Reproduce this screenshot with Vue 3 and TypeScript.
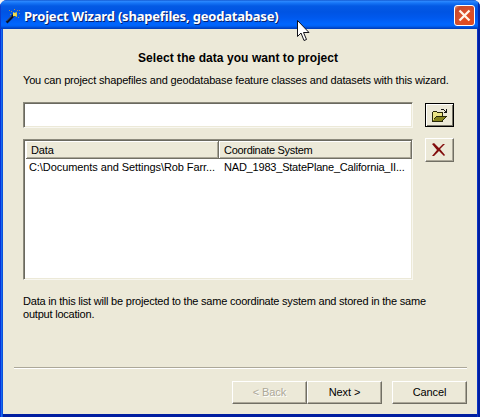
<script setup lang="ts">
interface DataRow {
  path: string
  system: string
}

const rows: DataRow[] = [
  { path: 'C:\\Documents and Settings\\Rob Farr...', system: 'NAD_1983_StatePlane_California_II...' },
]
</script>

<template>
  <div class="window">
    <header class="titlebar">
      <svg class="wand" width="16" height="17" viewBox="0 0 16 17">
        <path d="M1.500 14.500L9 7" stroke="#0c1224" stroke-width="2.600" />
        <path d="M1.200 13.400L6.500 8" stroke="#7f96c8" stroke-width=".5" />
        <path d="M8 4l2 1 1.500-1.500L12 6v3l-2-1-2 .5z" fill="#e8d23c" />
        <path d="M8 5h3v3H8z" fill="#f2de50" />
        <path d="M4 2h1v1H4zM6 3h1v1H6zM9 1h1v1H9zM12 2h1v1h-1zM14 5h1v1h-1zM13 9h1v1h-1zM5 6h1v1H5zM14 2h1v1h-1z" fill="#a58f58" />
      </svg>
      <h1>Project Wizard (shapefiles, geodatabase)</h1>
      <button class="close" aria-label="Close">
        <svg width="19" height="19" viewBox="0 0 19 19">
          <path d="M4.500 4.500l10 10M14.500 4.500l-10 10" stroke="#fff5e8" stroke-width="2.300" />
        </svg>
      </button>
    </header>

    <main class="body">
      <h2>Select the data you want to project</h2>
      <p class="intro">You can project shapefiles and geodatabase feature classes and datasets with this wizard.</p>

      <div class="picker">
        <input class="path" type="text" aria-label="Data path" />
        <button class="tool open" aria-label="Browse">
          <svg width="17" height="15" viewBox="0 0 17 15" shape-rendering="crispEdges">
            <path d="M1 4h1V3h4v1h6v4h4v1h-1v1h-1v1h-1v1h-1v2H1z" fill="#29290a" />
            <path d="M2 5V4h4v1h5v3H5v1H4v1H3v2H2z" fill="#eae486" />
            <path d="M5 9h9v1h-1v1h-1v1h-1v1H2v-1h1v-1h1v-1h1z" fill="#85841d" />
            <path d="M10 2V1h3v1h1v1h1V1h1v4h-3V4h1V3h-1V2z" fill="#171717" />
          </svg>
        </button>
        <div class="list">
          <div class="cols head">
            <div class="cell">Data</div>
            <div class="cell system-title">Coordinate System</div>
          </div>
          <div v-for="row in rows" :key="row.path" class="cols row">
            <div class="path-text">{{ row.path }}</div>
            <div class="system-text">{{ row.system }}</div>
          </div>
        </div>
        <button class="tool remove" aria-label="Remove">
          <svg width="14" height="14" viewBox="0 0 14 14">
            <path d="M0 1l2-1 5 5 4-4h2L8 6l5 6-1 1-5-5-5 5H0l5-6z" fill="#820c0c" />
          </svg>
        </button>
      </div>

      <p class="note">
        <span>Data in this list will be projected to the same coordinate system and stored in the same</span><br />
        <span>output location.</span>
      </p>

      <footer class="actions">
        <button class="btn back" disabled>&lt; Back</button>
        <button class="btn next">Next &gt;</button>
        <button class="btn cancel">Cancel</button>
      </footer>
    </main>

    <svg class="cursor" width="13" height="22" viewBox="0 0 13 22">
      <path d="M.5.5v16l3.500-3.500 3 7.500 2.500-1-3-7H12z" fill="#fff" stroke="#101018" />
    </svg>
  </div>
</template>

<style>
body {
  background: #f4f4f4;
}
</style>

<style scoped>
* {
  box-sizing: border-box;
}

.window {
  position: relative;
  display: flex;
  flex-direction: column;
  width: 480px;
  height: 417px;
  overflow: hidden;
  border-radius: 7px 7px 0 0;
  background: linear-gradient(90deg, #0831d9 0 1px, #166aee 1px 2px, #0a50dc 2px 3px, transparent 3px 477px, #0a32c4 477px 478px, #001ea0 478px),
    linear-gradient(#0a36c8, #001ea0);
  color: #000;
  font: 11px/13px "Liberation Sans", Arial, sans-serif;
  letter-spacing: -0.16px;
}

.titlebar {
  display: flex;
  align-items: flex-start;
  flex: none;
  height: 29px;
  padding: 5px 5px 0 5px;
  background: linear-gradient(#0b48c0 0, #2f8bff 1px, #1675f6 3px, #045ae4 6px, #0054e3 12px, #0059ee 18px, #0066ff 24px, #0062f6 26px, #0046c8 28px, #003cb8 29px);
  box-shadow: inset 1px 0 #0a3ccc, inset -2px 0 #002bb0;
}

.wand {
  flex: none;
  margin-top: 3px;
}

h1 {
  flex: 1;
  margin: 3px 0 0 3px;
  color: #fff;
  font: bold 13px/16px "Noto Sans", sans-serif;
  letter-spacing: -0.2px;
  white-space: nowrap;
  text-shadow: 1px 1px #07216e;
}

.close {
  flex: none;
  width: 21px;
  height: 21px;
  padding: 0;
  border: 1px solid #fff;
  border-radius: 3px;
  background: radial-gradient(circle at 70% 75%, #e34a1a, #d9502c 50%, #c54a2c 80%, #e59b83);
}

.close svg {
  display: block;
}

.body {
  flex: none;
  height: 385px;
  margin: 0 3px;
  padding: 22px 11px 0;
  background: #ece9d8;
}

h2,
p {
  margin: 0;
  white-space: nowrap;
}

h2 {
  padding-left: 124px;
  font: bold 12px/15px "Liberation Sans", Arial, sans-serif;
  letter-spacing: 0.06px;
}

.intro {
  margin: 8px 0 0 9px;
}

.picker {
  display: grid;
  grid-template-columns: 390px 30px;
  grid-template-rows: 26px 141px;
  column-gap: 12px;
  row-gap: 11px;
  margin: 15px 0 0 9px;
}

.path,
.list {
  width: 390px;
  border: 1px solid;
  border-color: #8c8a7c #f8f7f0 #f8f7f0 #8c8a7c;
  border-radius: 0;
  background: #fff;
  box-shadow: inset 1px 1px #6a695f, inset -1px -1px #ece9d8;
  outline: 0;
}

.list {
  padding: 1px 2px 2px 2px;
}

.tool,
.btn {
  display: flex;
  align-items: center;
  justify-content: center;
  padding: 0;
  border: 1px solid;
  border-color: #fff #716f64 #716f64 #fff;
  border-radius: 0;
  background: #ece9d8;
  box-shadow: inset -1px -1px #aca899;
  color: #000;
  font: inherit;
  letter-spacing: -0.1px;
  white-space: nowrap;
}

.tool {
  width: 29px;
  height: 24px;
}

.open {
  margin-top: 1px;
  border-color: #000;
  box-shadow: inset 1px 1px #fff, inset -1px -1px #777568;
}

.remove {
  margin-top: -1px;
  padding-right: 1px;
}

.cols {
  display: grid;
  grid-template-columns: 193px 193px;
  white-space: nowrap;
}

.head {
  height: 18px;
  background: #ece9d8;
}

.cell {
  padding: 3px 0 0 5px;
  border: solid;
  border-width: 0 1px 1px 0;
  border-color: #716f64;
  box-shadow: inset 1px 1px #fff, inset -1px -1px #aca899;
}

.system-title {
  letter-spacing: -0.3px;
}

.row {
  padding-top: 2px;
}

.path-text {
  padding-left: 3px;
  letter-spacing: -0.08px;
}

.system-text {
  padding-left: 5px;
  letter-spacing: -0.2px;
}

.note {
  margin: 15px 0 0 9px;
  letter-spacing: -0.21px;
}

.actions {
  display: grid;
  grid-template-columns: 75px 85px 75px;
  justify-content: end;
  width: 453px;
  height: 40px;
  margin-top: 46px;
  padding-top: 13px;
  border-top: 1px solid #aca899;
  box-shadow: inset 0 1px #fff;
}

.btn {
  width: 75px;
  height: 23px;
}

.back {
  color: #aca899;
  text-shadow: 1px 1px #fff;
}

.cursor {
  position: absolute;
  left: 297px;
  top: 20px;
}
</style>
